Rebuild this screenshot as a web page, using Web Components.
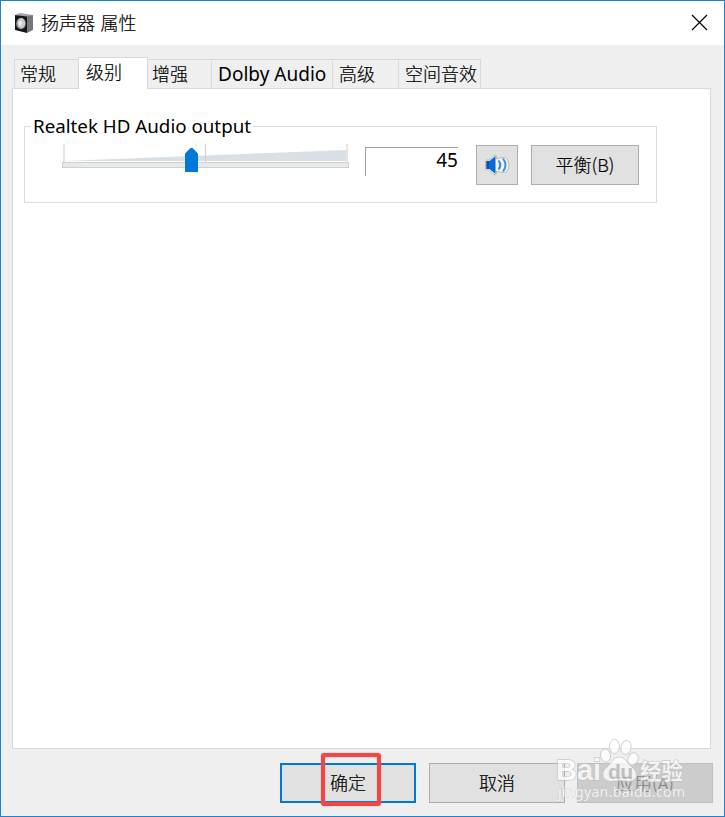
<!DOCTYPE html>
<html lang="zh-CN">
<head>
<meta charset="UTF-8">
<title>扬声器 属性</title>
<style>
    html, body {
        margin: 0;
        height: 100%;
        overflow: hidden;
    }
    body {
        font: 18px/24px "Noto Sans", "Noto Sans CJK SC", sans-serif;
        color: #000;
    }
</style>
</head>
<body>
<speaker-dialog></speaker-dialog>

<script>
class TitleBar extends HTMLElement {
    constructor() {
        super();
        this.attachShadow({ mode: 'open' });
        this.shadowRoot.innerHTML = `
            <style>
                :host {
                    display: flex;
                    align-items: center;
                    height: 44px;
                    padding: 0 16px 0 14px;
                    background: #fff;
                    box-sizing: border-box;
                }
                .title {
                    flex: 1;
                    margin: -2px 0 0 7px;
                    word-spacing: 1.500px;
                    font-family: "Noto Sans CJK SC", sans-serif;
                    font-weight: 300;
                    -webkit-text-stroke: 0.2px #000;
                }
                svg { display: block; margin-top: -1px; }
            </style>
            <svg width="19" height="22" viewBox="0 0 19 22">
                <path d="M0 3 L5 1 L18 3 L12 5Z" fill="#a6a6a8"/>
                <path d="M12 4 L18 3 V18 L12 21Z" fill="#77787d"/>
                <path d="M0 3 L12 4.500 V21 L0 18Z" fill="#161616"/>
                <ellipse cx="6" cy="11.500" rx="4.800" ry="5.800" fill="#8c9294"/>
                <ellipse cx="6.300" cy="11.200" rx="3.800" ry="5" fill="#c7ced0"/>
                <ellipse cx="5.300" cy="11" rx="1.600" ry="2.500" fill="#eef2f3"/>
            </svg>
            <span class="title"><slot></slot></span>
            <svg width="17" height="17" viewBox="0 0 17 17">
                <path d="M1 1 L16 16 M16 1 L1 16" stroke="#000" stroke-width="1.200"/>
            </svg>
        `;
    }
}

class TabItem extends HTMLElement {
    constructor() {
        super();
        this.attachShadow({ mode: 'open' });
        this.shadowRoot.innerHTML = `
            <style>
                :host {
                    display: block;
                    box-sizing: border-box;
                    height: 29px;
                    margin-bottom: 1px;
                    padding: 2px 0 0 6px;
                    border: 1px solid #d9d9d9;
                    border-width: 1px 1px 0 0;
                    background: #efefef;
                    white-space: nowrap;
                    -webkit-text-stroke: 0.2px #000;
                    font-weight: 300;
                }
                :host([first]) {
                    border-left-width: 1px;
                    padding-left: 5px;
                }
                :host([latin]) {
                    font-size: 19px;
                    font-weight: 400;
                    letter-spacing: 0.02px;
                    -webkit-text-stroke: 0;
                }
                :host([active]) {
                    height: 32px;
                    margin-bottom: 0;
                    padding-left: 7px;
                    background: #fff;
                    border-left-width: 1px;
                    margin-left: -1px;
                }
            </style>
            <slot></slot>
        `;
    }
}

class TabStrip extends HTMLElement {
    constructor() {
        super();
        this.attachShadow({ mode: 'open' });
        this.shadowRoot.innerHTML = `
            <style>
                :host {
                    display: flex;
                    align-items: flex-end;
                    height: 32px;
                    padding-left: 2px;
                    position: relative;
                    z-index: 1;
                }
            </style>
            <slot></slot>
        `;
    }
}

class GroupBox extends HTMLElement {
    constructor() {
        super();
        this.attachShadow({ mode: 'open' });
        this.shadowRoot.innerHTML = `
            <style>
                :host { display: block; }
                fieldset {
                    box-sizing: border-box;
                    width: 633px;
                    height: 89px;
                    margin: 0;
                    padding: 0 17px 0 37px;
                    border: 1px solid #dcdcdc;
                    min-width: 0;
                }
                legend {
                    margin-left: -31px;
                    padding: 0 2px;
                    height: 24px;
                    font-size: 18.750px;
                    white-space: nowrap;
                }
                .row {
                    display: flex;
                    align-items: flex-start;
                    margin-top: 6px;
                }
            </style>
            <fieldset>
                <legend>${this.getAttribute('label')}</legend>
                <div class="row"><slot></slot></div>
            </fieldset>
        `;
    }
}

class VolumeSlider extends HTMLElement {
    constructor() {
        super();
        this.attachShadow({ mode: 'open' });
        this.shadowRoot.innerHTML = `
            <style>
                :host { display: block; width: 288px; height: 30px; }
                svg { display: block; }
            </style>
            <svg width="288" height="30" viewBox="0 0 288 30">
                <path d="M1 17 L285 6 V17Z" fill="#d8e0e6"/>
                <path d="M2 0 V18" stroke="#e4e4e4" stroke-width="2"/>
                <path d="M285 0 V18" stroke="#e4e4e4" stroke-width="2"/>
                <path d="M143.500 0 V18" stroke="#cfcfcf"/>
                <rect x="0.500" y="18.500" width="286" height="5" fill="#e7eaea" stroke="#d0d0d0"/>
                <path d="M123 9.500 L128.500 4 H130.500 L136 9.500 V28 H123Z" fill="#0078d7"/>
            </svg>
        `;
    }
}

class LevelField extends HTMLElement {
    constructor() {
        super();
        this.attachShadow({ mode: 'open' });
        this.shadowRoot.innerHTML = `
            <style>
                :host {
                    display: block;
                    box-sizing: border-box;
                    width: 93px;
                    height: 29px;
                    margin: 3px 18px 0 15px;
                    border: 1px solid #a0a0a0;
                    border-width: 1px 0 0 1px;
                    text-align: right;
                    font-size: 19px;
                }
            </style>
            <slot></slot>
        `;
    }
}

class PushButton extends HTMLElement {
    constructor() {
        super();
        this.attachShadow({ mode: 'open' });
        this.shadowRoot.innerHTML = `
            <style>
                :host {
                    display: flex;
                    align-items: center;
                    justify-content: center;
                    box-sizing: border-box;
                    width: 136px;
                    height: 40px;
                    padding-bottom: 2px;
                    border: 1px solid #adadad;
                    background: #e1e1e1;
                    font-family: "Noto Sans CJK SC", sans-serif;
                    font-weight: 300;
                    -webkit-text-stroke: 0.2px currentColor;
                }
                :host([default]) { border: 2px solid #0078d7; }
                :host([disabled]) {
                    border-color: #bfbfbf;
                    background: #ccc;
                    color: #838383;
                }
                :host([kind]) { margin-top: 1px; }
                :host([kind="icon"]) {
                    width: 42px;
                    margin-right: 13px;
                    padding: 0;
                }
                :host([kind="small"]) { width: 108px; }
            </style>
            <slot></slot>
        `;
    }
}

class SoundIcon extends HTMLElement {
    constructor() {
        super();
        this.attachShadow({ mode: 'open' });
        this.shadowRoot.innerHTML = `
            <style>
                :host { display: block; }
                svg { display: block; }
            </style>
            <svg width="26" height="22" viewBox="0 0 26 22">
                <path d="M1.500 7.500 Q1.500 6 3 6 H5 L10 1.500 Q12.500 0 12.500 3 V5 L18 3.500 Q22 2.500 24 6 Q26 11 24 16 Q22 19.500 18 18.500 L12.500 17 V19 Q12.500 22 10 20.500 L5 16 H3 Q1.500 16 1.500 14.500Z"
                    fill="#f3f3f1" stroke="#bcbcb8"/>
                <path d="M2.500 7 H5.500 L11.500 2 V20 L5.500 15 H2.500Z" fill="#0868d4"/>
                <path d="M2.500 7 H5 V15 H2.500Z" fill="#0450a8"/>
                <path d="M14.500 6.500 Q18 11 14.500 15.500" fill="none" stroke="#3387e4" stroke-width="2"/>
                <path d="M19 4.500 Q24 11 19 17.500" fill="none" stroke="#3f91e6" stroke-width="2"/>
            </svg>
        `;
    }
}

class SiteWatermark extends HTMLElement {
    constructor() {
        super();
        this.attachShadow({ mode: 'open' });
        this.shadowRoot.innerHTML = `
            <style>
                :host {
                    position: absolute;
                    left: 553px;
                    top: 736px;
                    opacity: 0.75;
                }
                svg { display: block; }
                text {
                    fill: #fff;
                    stroke: #bdbdbd;
                    stroke-width: 1.500px;
                    paint-order: stroke;
                }
            </style>
            <svg width="150" height="66" viewBox="0 0 150 66">
                <g fill="#fff" stroke="#c4c4c4">
                    <ellipse cx="51.500" cy="18.500" rx="5" ry="6.500" transform="rotate(-10 51.500 18.500)"/>
                    <ellipse cx="60.500" cy="9.500" rx="5" ry="7"/>
                    <ellipse cx="72" cy="10.500" rx="5" ry="7" transform="rotate(12 72 10.500)"/>
                    <ellipse cx="79" cy="22" rx="5" ry="6.500" transform="rotate(20 79 22)"/>
                    <path d="M65 20 C71 20 73 26 78 30 C85 35 84 45 74 44.500 Q66 43 58 44.500 C48 45 46 35 53 30 C58 26 59 20 65 20Z"/>
                </g>
                <text x="2" y="43" font-family="Liberation Sans" font-size="29" font-weight="700" textLength="45">Bai</text>
                <text x="54" y="42" font-family="Liberation Sans" font-size="21" font-weight="700" textLength="25" style="fill:#bbb;stroke:none">du</text>
                <text x="86" y="42" font-family="Noto Sans CJK SC" font-size="21.500" font-weight="700">经验</text>
                <text x="4" y="60" font-family="Noto Sans" font-size="14" textLength="127" style="stroke-width:0.800px">jingyan.baidu.com</text>
            </svg>
        `;
    }
}

class SpeakerDialog extends HTMLElement {
    constructor() {
        super();
        this.attachShadow({ mode: 'open' });
        this.shadowRoot.innerHTML = `
            <style>
                :host {
                    display: flex;
                    flex-direction: column;
                    box-sizing: border-box;
                    width: 725px;
                    height: 817px;
                    position: relative;
                    border: 1px solid #1883d7;
                    background: #efefef;
                }
                .tabs { margin: 12px 0 0 11px; }
                .panel {
                    box-sizing: border-box;
                    width: 699px;
                    height: 661px;
                    margin: -1px 0 0 11px;
                    padding: 25px 0 0 11px;
                    border: 1px solid #d9d9d9;
                    background: #fff;
                }
                footer {
                    display: flex;
                    gap: 13px;
                    justify-content: flex-end;
                    margin-top: 14px;
                    padding-right: 11px;
                }
                footer push-button:last-child { margin-left: -1px; }
                .highlight {
                    position: absolute;
                    left: 320px;
                    top: 752px;
                    width: 52px;
                    height: 45px;
                    border: 4px solid #f04747;
                    border-radius: 3px;
                    box-shadow: 0 0 1px #f04747, inset 0 0 1px #f04747;
                }
            </style>
            <title-bar>扬声器 属性</title-bar>
            <tab-strip class="tabs">
                <tab-item first style="width:65px">常规</tab-item>
                <tab-item active style="width:70px">级别</tab-item>
                <tab-item style="width:64px;padding-left:4px">增强</tab-item>
                <tab-item latin style="width:121px">Dolby Audio</tab-item>
                <tab-item style="width:66px">高级</tab-item>
                <tab-item style="width:82px">空间音效</tab-item>
            </tab-strip>
            <div class="panel">
                <group-box label="Realtek HD Audio output">
                    <volume-slider></volume-slider>
                    <level-field>45</level-field>
                    <push-button kind="icon"><sound-icon></sound-icon></push-button>
                    <push-button kind="small">平衡(B)</push-button>
                </group-box>
            </div>
            <footer>
                <push-button default>确定</push-button>
                <push-button>取消</push-button>
                <push-button disabled>应用(A)</push-button>
            </footer>
            <div class="highlight"></div>
            <site-watermark></site-watermark>
        `;
    }
}

customElements.define('title-bar', TitleBar);
customElements.define('tab-item', TabItem);
customElements.define('tab-strip', TabStrip);
customElements.define('group-box', GroupBox);
customElements.define('volume-slider', VolumeSlider);
customElements.define('level-field', LevelField);
customElements.define('push-button', PushButton);
customElements.define('sound-icon', SoundIcon);
customElements.define('site-watermark', SiteWatermark);
customElements.define('speaker-dialog', SpeakerDialog);
</script>
</body>
</html>
